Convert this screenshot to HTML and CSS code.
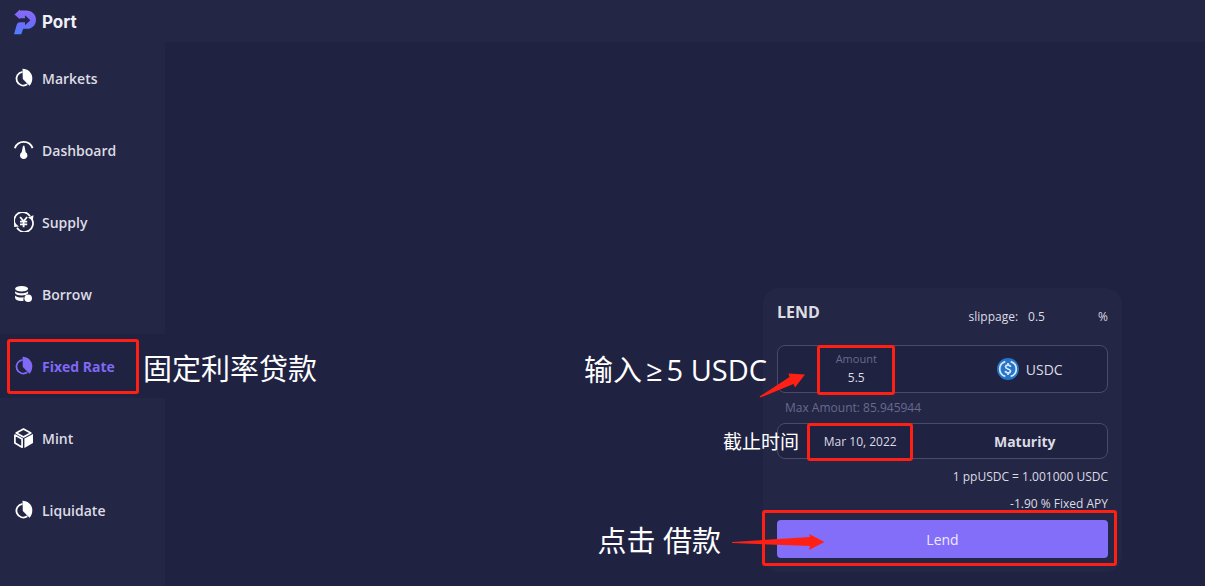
FILE: index.html
```html
<!DOCTYPE html>
<html lang="en">
<head>
    <meta charset="UTF-8">
    <meta name="viewport" content="width=device-width, initial-scale=1.0">
    <title>Port</title>
    <link rel="stylesheet" href="styles.css">
</head>

<body>
<svg class="sprite" aria-hidden="true">
    <symbol id="icon-pie" viewBox="0 0 20 20">
        <path d="M8.500 3.800A6.900 6.900 0 1 0 13.300 16.300" fill="none" stroke="currentColor" stroke-width="1.8"/>
        <path d="M8.500 .8C14 .8 18.300 5 18.300 10.300C18.300 13.400 17.300 15.800 15.500 17.800L8.800 11Z" fill="currentColor"/>
    </symbol>
</svg>

<header class="header">
    <a class="logo" href="#">
        <svg class="logo__mark" viewBox="0 0 24 26" aria-hidden="true">
            <defs>
                <linearGradient id="logo-fill" x1="0" y1="0" x2="0" y2="1">
                    <stop offset="0" stop-color="#8a6bf5"/>
                    <stop offset="0.5" stop-color="#7468fb"/>
                    <stop offset="1" stop-color="#4a80ff"/>
                </linearGradient>
            </defs>
            <path fill="url(#logo-fill)" d="M1.500 5.500L7 .6V1.500H13C19 1.500 23 5.500 23 10.700C23 16 19 19.800 14 19.800H10.200L8.200 25.300H1L3.800 15.500Q4.600 13.200 7 13.200H12V16.200L17.300 11.200L12 6.200V9.200H6.800V10.300Z"/>
        </svg>
        <span class="logo__name">Port</span>
    </a>
</header>

<div class="layout">
    <nav class="sidebar">
        <a class="nav-item" href="#">
            <svg class="nav-item__icon" aria-hidden="true"><use href="#icon-pie"/></svg>
            Markets
        </a>
        <a class="nav-item" href="#">
            <svg class="nav-item__icon" viewBox="0 0 20 20" aria-hidden="true">
                <path d="M.8 8.200C4-.2 15.500-.2 18.600 8.200" fill="none" stroke="currentColor" stroke-width="1.9"/>
                <path d="M9 5.800H10.400L11.700 12.300A3.700 3.700 0 1 1 7.700 12.300Z" fill="currentColor"/>
            </svg>
            Dashboard
        </a>
        <a class="nav-item" href="#">
            <svg class="nav-item__icon" viewBox="0 0 20 20" aria-hidden="true">
                <g fill="none" stroke="currentColor" stroke-width="1.7">
                    <path d="M1.400 13A8.500 8.500 0 0 1 16 4.200M17.800 7A8.500 8.500 0 0 1 3 15.800"/>
                    <path d="M6.100 5L9.600 9.300L13.100 5M9.600 9V15.200M6 9.700H13.200M6 12.300H13.200" stroke-width="1.8"/>
                </g>
                <path d="M14 5.500L19.500 3.200L18.800 8.800ZM0 15L.6 10.800L5 14.600Z" fill="currentColor"/>
            </svg>
            Supply
        </a>
        <a class="nav-item" href="#">
            <svg class="nav-item__icon" viewBox="0 0 20 20" aria-hidden="true">
                <ellipse cx="7.600" cy="4.800" rx="6.500" ry="2.800" fill="currentColor"/>
                <path d="M1.100 7.300C3.600 10 11.600 10 14.100 7.300V9.300C12.100 12.300 3.100 12.300 1.100 9.300ZM1.100 11.500C3.100 13.600 6.600 14 9.900 13.300C9.400 14.500 9.300 15.300 9.600 16.700C5.600 17.500 2.100 16.500 1.100 14.300Z" fill="currentColor"/>
                <circle cx="14.200" cy="14.200" r="3.800" fill="currentColor"/>
            </svg>
            Borrow
        </a>
        <a class="nav-item nav-item--active" href="#">
            <svg class="nav-item__icon" aria-hidden="true"><use href="#icon-pie"/></svg>
            Fixed Rate
            <span class="mark mark--nav"></span>
            <span class="note note--nav" lang="zh-CN">固定利率贷款</span>
        </a>
        <a class="nav-item" href="#">
            <svg class="nav-item__icon" viewBox="0 0 20 20" aria-hidden="true">
                <g fill="none" stroke="currentColor" stroke-width="1.7" stroke-linejoin="round">
                    <path d="M9.500 1L16.800 5L9.500 9L2.200 5Z"/>
                    <path d="M.9 7L8.100 11V19.200L.9 15Z"/>
                </g>
                <path d="M10.400 10.500L19 6.100V15L10.400 20Z" fill="currentColor"/>
            </svg>
            Mint
        </a>
        <a class="nav-item" href="#">
            <svg class="nav-item__icon" aria-hidden="true"><use href="#icon-pie"/></svg>
            Liquidate
        </a>
    </nav>

    <main class="main">
        <form class="card">
            <div class="card__head">
                <h1 class="card__title">LEND</h1>
                <div class="slippage">
                    <label for="slippage">slippage:</label>
                    <input class="slippage__input" id="slippage" type="text" value="0.5">
                    <span>%</span>
                </div>
            </div>

            <div class="field field--amount">
                <div class="amount">
                    <label class="amount__label" for="amount">Amount</label>
                    <input class="amount__input" id="amount" type="text" value="5.5">
                </div>
                <div class="token">
                    <svg class="token__icon" viewBox="0 0 22 22" aria-hidden="true">
                        <circle cx="11" cy="11" r="11" fill="#2775ca"/>
                        <g fill="none" stroke="#d8e8fb" stroke-width="1.7">
                            <path d="M8.300 3.600A7.700 7.700 0 0 0 8.300 18.400M13.700 3.600A7.700 7.700 0 0 1 13.700 18.400"/>
                            <path d="M13.500 9C13.200 6.500 8.600 6.500 8.600 8.800C8.600 11.600 13.500 10.300 13.500 13.100C13.500 15.500 8.600 15.500 8.400 12.900M11 5V7M11 15V17"/>
                        </g>
                    </svg>
                    <span>USDC</span>
                </div>
            </div>
            <p class="hint">Max Amount: 85.945944</p>

            <div class="field field--date">
                <select class="date" id="maturity">
                    <option>Mar 10, 2022</option>
                </select>
                <label class="date__label" for="maturity">Maturity</label>
            </div>

            <p class="rate">1 ppUSDC = 1.001000 USDC</p>
            <p class="rate">-1.90 % Fixed APY</p>
            <button class="lend" type="button">Lend</button>

            <span class="mark mark--amount"></span>
            <span class="mark mark--date"></span>
            <span class="mark mark--lend"></span>
            <span class="note note--amount" lang="zh-CN">输入<span class="note__sign">≥</span>5 USDC</span>
            <span class="note note--date" lang="zh-CN">截止时间</span>
            <span class="note note--lend" lang="zh-CN">点击 借款</span>
            <svg class="arrow arrow--amount" viewBox="0 0 48 26" aria-hidden="true">
                <path d="M.5 24.500L30.500 5L29.500 1.500L46 2.500L36 15.500L34.500 12L1.500 25.500Z"/>
            </svg>
            <svg class="arrow arrow--lend" viewBox="0 0 94 18" aria-hidden="true">
                <path d="M1 9L79 4L78 1L93.500 9L78 17L79 13L1 10Z"/>
            </svg>
        </form>
    </main>
</div>
</body>
</html>
```
FILE: styles.css
```css
* {
    box-sizing: border-box;
    padding: 0;
    margin: 0;
}

body {
    min-height: 100vh;
    display: flex;
    flex-direction: column;
    font-family: "Open Sans", "Noto Sans CJK SC", sans-serif;
    font-size: 12px;
    color: #dcdce3;
    background-color: #202242;
}

a {
    color: inherit;
    text-decoration: none;
}

input,
select,
button {
    font: inherit;
    color: inherit;
    background: none;
    border: none;
    outline: none;
    appearance: none;
}

.sprite {
    position: absolute;
    width: 0;
    height: 0;
}

.header {
    height: 42px;
    padding: 2px 13px 0;
    display: flex;
    align-items: center;
    background-color: #242646;
}

.logo {
    display: flex;
    align-items: center;
    gap: 5px;
}

.logo__mark {
    width: 24px;
    height: 26px;
}

.logo__name {
    font-family: Inter, sans-serif;
    font-size: 17px;
    font-weight: 700;
    line-height: 24px;
    color: #f0f0f5;
}

.layout {
    flex: 1;
    display: flex;
}

/* sidebar */
.sidebar {
    width: 165px;
    flex-shrink: 0;
    padding-top: 4px;
    display: flex;
    flex-direction: column;
    gap: 8px;
    background-color: #242646;
}

.nav-item {
    position: relative;
    height: 64px;
    padding-left: 14px;
    display: flex;
    align-items: center;
    gap: 8px;
    font-size: 14px;
    font-weight: 600;
}

.nav-item--active {
    color: #7f69f5;
    font-weight: 700;
    background-color: #202242;
}

.nav-item__icon {
    width: 20px;
    height: 20px;
    color: #fff;
}

.nav-item--active .nav-item__icon {
    color: inherit;
}

/* lend card */
.main {
    flex: 1;
    display: flex;
    justify-content: flex-end;
    align-items: flex-end;
    padding: 0 83px 14px;
}

.card {
    position: relative;
    width: 359px;
    padding: 14px;
    border-radius: 16px;
    background-color: #242646;
}

.card__head {
    height: 25px;
    margin-bottom: 18px;
    display: flex;
    justify-content: space-between;
}

.card__title {
    font-size: 16px;
    font-weight: 700;
    line-height: 20px;
}

.slippage {
    display: flex;
    align-self: flex-end;
    gap: 10px;
    line-height: 20px;
}

.slippage__input {
    width: 60px;
}

.field {
    display: grid;
    grid-template-columns: 1fr 1fr;
    align-items: center;
    border: 1px solid #494b67;
    border-radius: 8px;
    background-color: #202242;
}

.field--amount {
    height: 48px;
}

.field--date {
    height: 36px;
    text-align: center;
}

.amount {
    display: flex;
    flex-direction: column;
    align-items: center;
    padding-right: 8px;
}

.amount__label {
    font-size: 11px;
    line-height: 18px;
    color: #686a8c;
}

.amount__input {
    width: 60px;
    line-height: 20px;
    text-align: center;
}

.token {
    display: flex;
    align-items: center;
    justify-content: center;
    gap: 7px;
    padding-left: 10px;
    font-size: 14px;
}

.token__icon {
    width: 22px;
    height: 22px;
}

.hint {
    margin: 5px 8px;
    line-height: 20px;
    color: #686a8c;
}

.date {
    text-align: center;
    text-align-last: center;
}

.date__label {
    font-size: 14px;
    font-weight: 700;
}

.rate {
    line-height: 27px;
    text-align: right;
}

.field--date + .rate {
    margin-top: 4px;
}

.lend {
    width: 100%;
    height: 38px;
    margin-top: 3px;
    border-radius: 4px;
    font-size: 14px;
    color: #eceafd;
    background-color: #836ef9;
}

/* walkthrough notes */
.mark {
    position: absolute;
    border: 3px solid #ff2015;
    border-radius: 3px;
    pointer-events: none;
}

.mark--nav {
    top: 5px;
    left: 7px;
    width: 132px;
    height: 55px;
}

.mark--amount {
    top: 57px;
    left: 54px;
    width: 78px;
    height: 50px;
}

.mark--date {
    top: 135px;
    left: 44px;
    width: 106px;
    height: 38px;
}

.mark--lend {
    top: 222px;
    left: -1px;
    width: 355px;
    height: 56px;
}

.note {
    position: absolute;
    font-size: 29px;
    font-weight: 400;
    line-height: 40px;
    white-space: nowrap;
    color: #fff;
}

.note__sign {
    padding: 0 4px;
}

.note--nav {
    top: 15px;
    left: 143px;
    z-index: 1;
}

.note--amount {
    top: 62px;
    right: 355px;
}

.note--date {
    top: 134px;
    right: 323px;
    font-size: 19px;
}

.note--lend {
    top: 233px;
    right: 401px;
}

.arrow {
    position: absolute;
    fill: #ff2015;
}

.arrow--amount {
    top: 84px;
    left: -4px;
    width: 48px;
    height: 26px;
}

.arrow--lend {
    top: 245px;
    left: -32px;
    width: 94px;
    height: 18px;
}
```
